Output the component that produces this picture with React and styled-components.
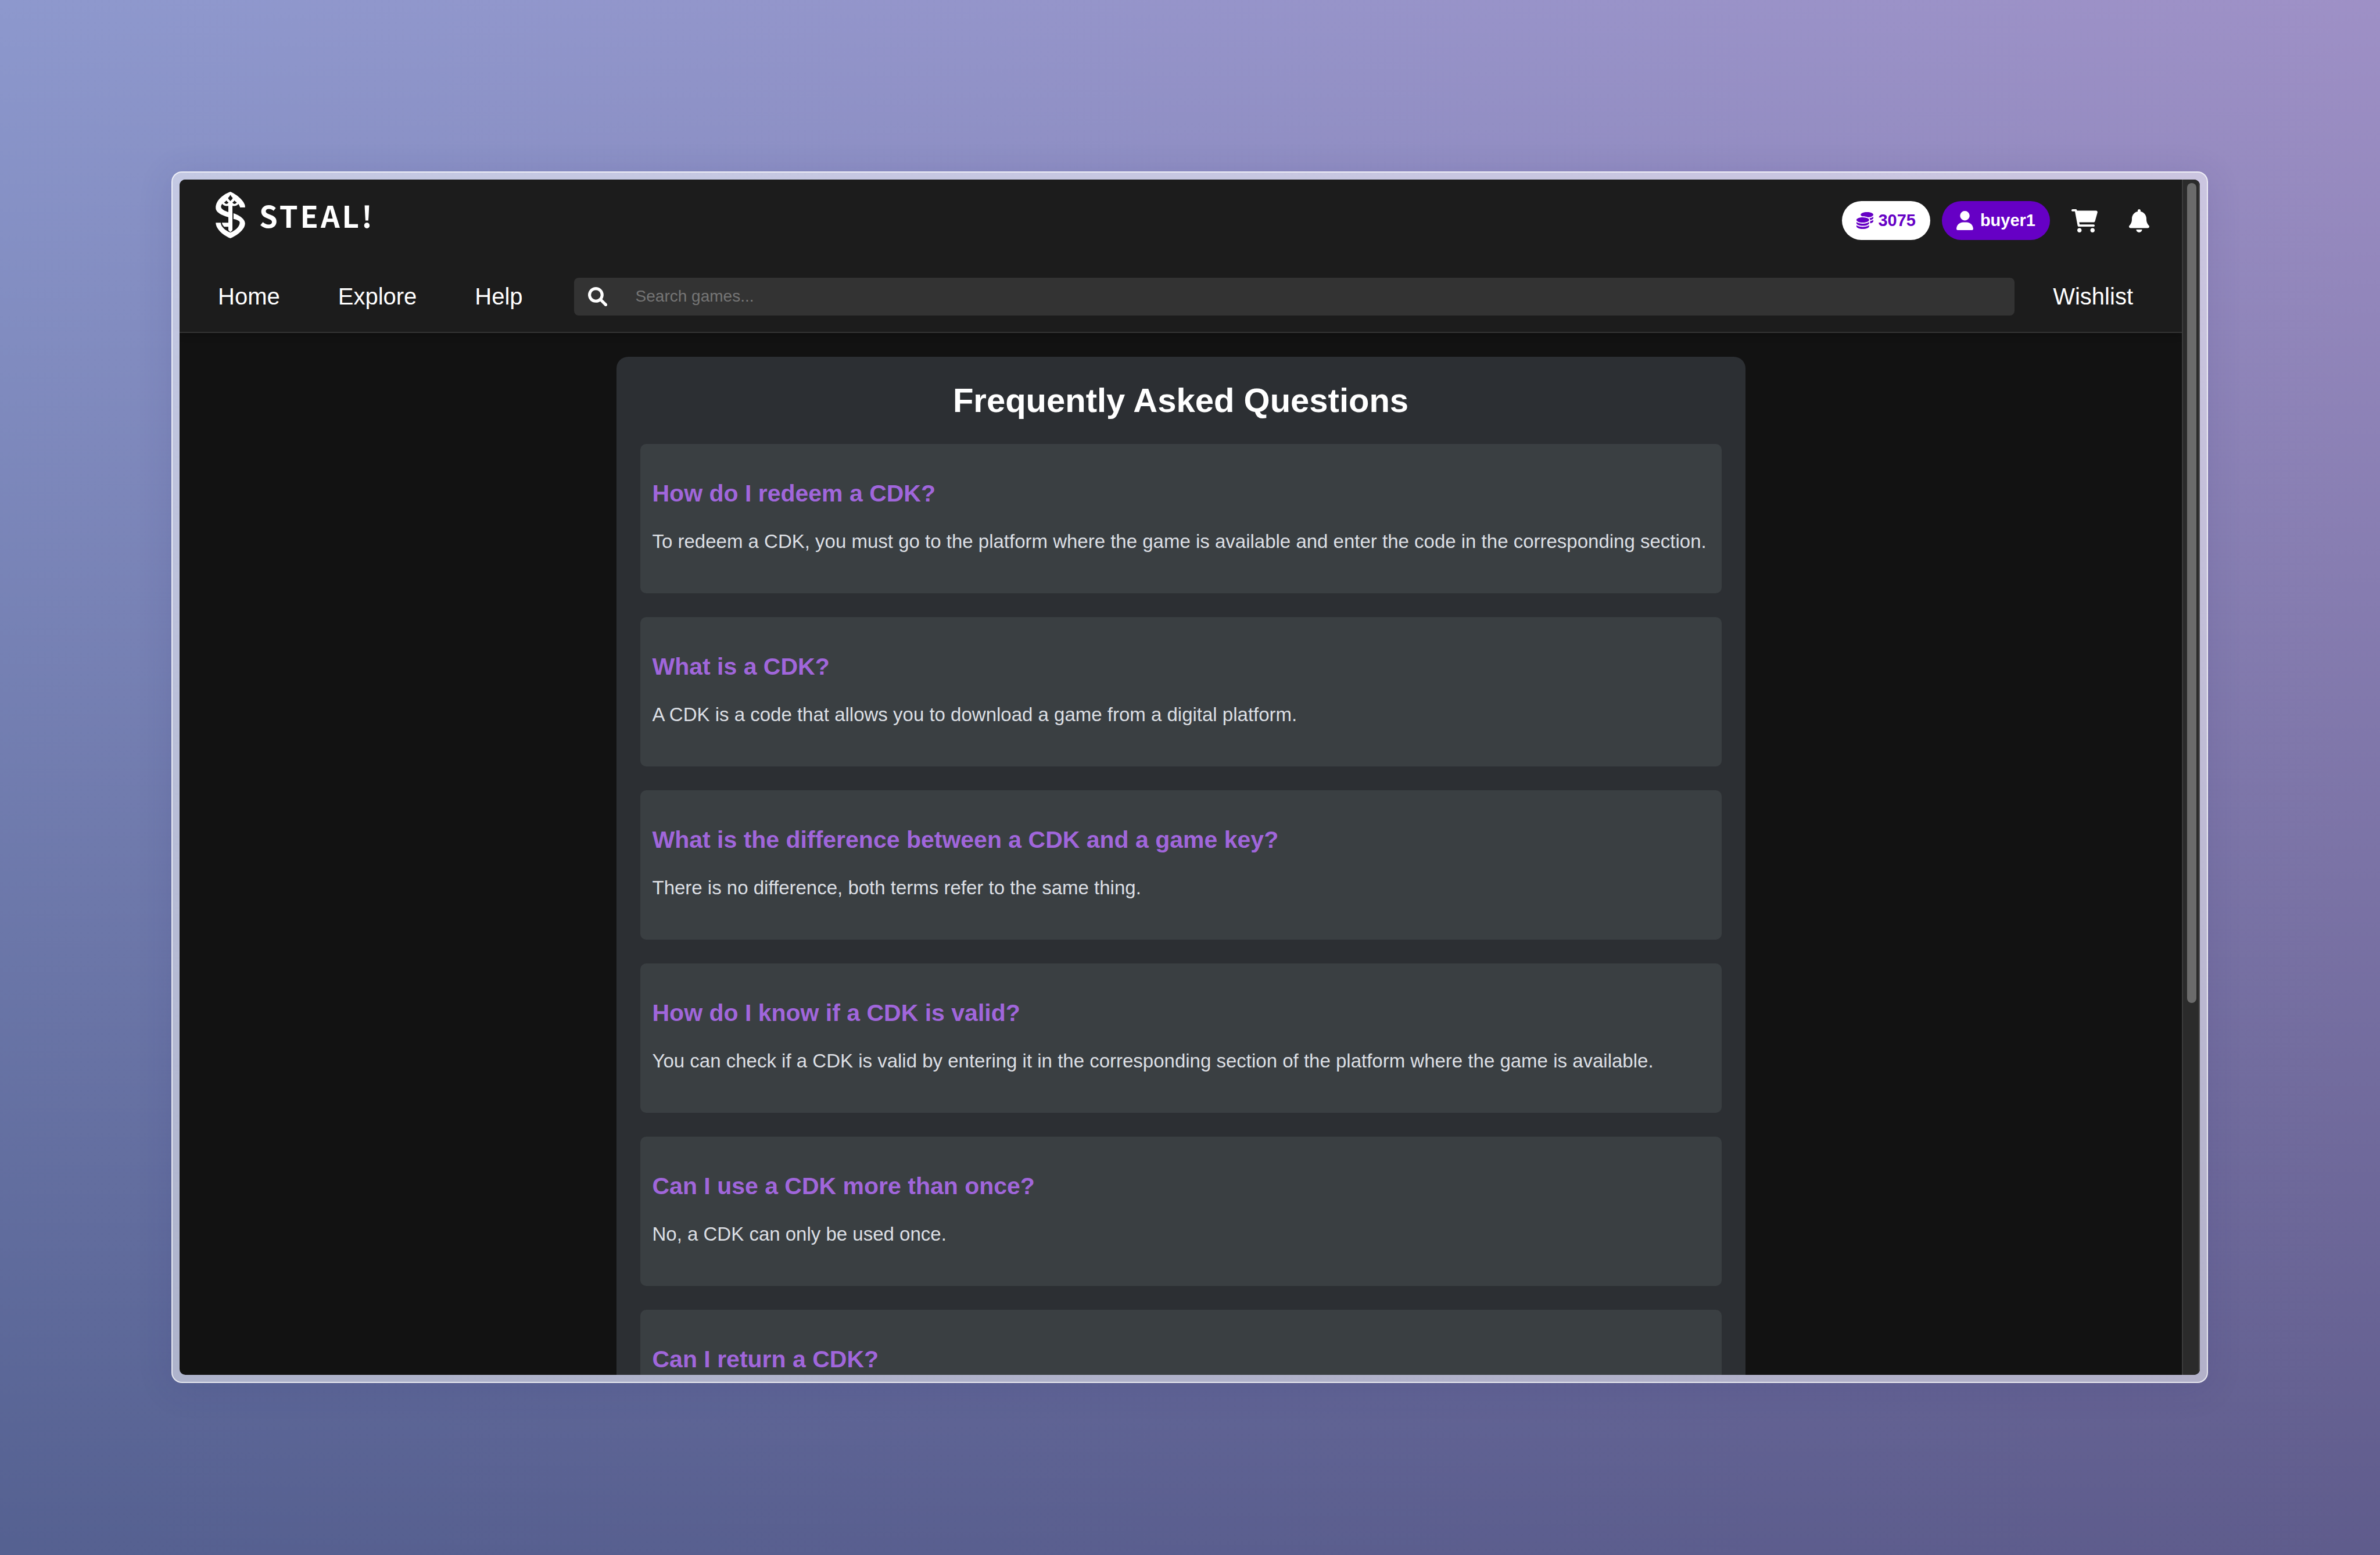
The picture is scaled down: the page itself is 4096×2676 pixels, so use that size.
import React from "react";
import styled, { createGlobalStyle } from "styled-components";
import { FaBell, FaCoins, FaUser } from "react-icons/fa6";

const GlobalStyle = createGlobalStyle`
  *, *::before, *::after { box-sizing: border-box; }
  body {
    margin: 0;
    font-family: "Liberation Sans", Arial, Helvetica, sans-serif;
    color: #fff;
  }
  h1, h2, p { margin: 0; }
  button, input { font: inherit; }
`;

const Backdrop = styled.div`
  display: flex;
  height: 100vh;
  padding: 295px 296px 296px 295px;
  background-image: linear-gradient(to bottom, #fff, #99a2b4),
    linear-gradient(to right, #8d98cd, #9e90c6);
  background-blend-mode: multiply;
`;

const Frame = styled.div`
  display: flex;
  flex: 1;
  min-width: 0;
  padding: 12px;
  border: 2px solid rgba(255, 255, 255, 0.7);
  border-radius: 18px;
  background: rgba(255, 255, 255, 0.5);
  box-shadow: 0 8px 60px rgba(40, 40, 110, 0.14);
`;

const Screen = styled.div`
  display: flex;
  flex: 1;
  min-width: 0;
  overflow: hidden;
  border-radius: 10px;
  background: #121212;
`;

const Page = styled.div`
  display: flex;
  flex: 1;
  flex-direction: column;
  min-width: 0;
  overflow: hidden;
`;

const Header = styled.header`
  display: flex;
  flex: none;
  flex-direction: column;
  gap: 65px;
  padding: 21px 0 28px;
  border-bottom: 2px solid #333;
  background: #1c1c1c;
  box-shadow: 0 4px 12px rgba(0, 0, 0, 0.2);
`;

const TopRow = styled.div`
  display: flex;
  align-items: flex-start;
  justify-content: space-between;
  padding: 0 56px 0 62px;
`;

const Brand = styled.a`
  display: flex;
  align-items: center;
  gap: 24px;
  color: #fff;
  text-decoration: none;
`;

const BrandMark = styled.svg`
  width: 51px;
  height: 80px;
  fill: currentColor;
`;

const BrandName = styled.span`
  font-family: "Noto Sans CJK JP", "Noto Sans", sans-serif;
  font-size: 51px;
  font-weight: 700;
  line-height: 80px;
  letter-spacing: 4px;
`;

const Actions = styled.div`
  display: flex;
  align-items: center;
  gap: 20px;
  padding-top: 16px;
`;

const Pill = styled.button`
  display: flex;
  align-items: center;
  gap: ${(p) => (p.$accent ? 12 : 8)}px;
  height: 67px;
  padding: 0 25px;
  border: 0;
  border-radius: 34px;
  background: ${(p) => (p.$accent ? "#6600c5" : "#fff")};
  color: ${(p) => (p.$accent ? "#fff" : "#6600c5")};
  font-size: 29px;
  font-weight: 700;
  line-height: 33px;
  cursor: pointer;

  svg {
    width: 29px;
    height: ${(p) => (p.$accent ? 33 : 29)}px;
  }
`;

const IconGroup = styled.div`
  display: flex;
  gap: 54px;
  padding-left: 17px;
`;

const IconButton = styled.button`
  display: flex;
  padding: 0;
  border: 0;
  background: none;
  color: #fff;
  cursor: pointer;

  svg {
    width: ${(p) => p.$width}px;
    height: 40px;
  }
`;

const NavRow = styled.div`
  display: flex;
  align-items: center;
  gap: 66px;
  padding: 0 84px 0 66px;
`;

const Nav = styled.nav`
  display: flex;
  gap: 100px;
  padding-right: 22px;
`;

const NavLink = styled.a`
  padding-bottom: 2px;
  color: #fff;
  font-size: 40px;
  line-height: 46px;
  text-decoration: none;
`;

const SearchBox = styled.form`
  display: flex;
  flex: 1;
  align-items: center;
  height: 65px;
  padding-left: 24px;
  border-radius: 8px;
  background: #333;
`;

const SearchLabel = styled.label`
  display: flex;
  padding-right: 49px;

  svg {
    width: 33px;
    height: 33px;
  }
`;

const SearchInput = styled.input`
  flex: 1;
  min-width: 0;
  height: 100%;
  padding: 0 0 2px;
  border: 0;
  outline: 0;
  background: none;
  color: #fff;
  font-size: 28px;

  &::placeholder {
    color: #757575;
    opacity: 1;
  }
`;

const Faq = styled.main`
  display: flex;
  flex: none;
  flex-direction: column;
  gap: 41px;
  width: 1943px;
  max-width: 100%;
  margin: 41px auto;
  padding: 41px;
  border-radius: 20px;
  background: #2c2f33;
`;

const Title = styled.h1`
  font-size: 58px;
  line-height: 68px;
  text-align: center;
`;

const Item = styled.section`
  min-height: 257px;
  padding: 61px 21px 70px;
  border-radius: 10px;
  background: #3a3f42;
`;

const Question = styled.h2`
  color: #a066db;
  font-size: 41px;
  line-height: 48px;
`;

const Answer = styled.p`
  margin-top: 40px;
  color: #dcdfe4;
  font-size: 33px;
  line-height: 38px;
`;

const ScrollTrack = styled.div`
  flex: none;
  width: 31px;
  padding: 6px 4px 6px 7px;
  border: solid;
  border-width: 0 2px;
  border-color: #3c3c3c #484848 #3c3c3c #3c3c3c;
  background: #2b2b2b;
`;

const ScrollThumb = styled.div`
  height: 69%;
  border-radius: 8px;
  background: #6b6b6b;
`;

const entries = [
  {
    question: "How do I redeem a CDK?",
    answer:
      "To redeem a CDK, you must go to the platform where the game is available and enter the code in the corresponding section.",
  },
  {
    question: "What is a CDK?",
    answer:
      "A CDK is a code that allows you to download a game from a digital platform.",
  },
  {
    question: "What is the difference between a CDK and a game key?",
    answer: "There is no difference, both terms refer to the same thing.",
  },
  {
    question: "How do I know if a CDK is valid?",
    answer:
      "You can check if a CDK is valid by entering it in the corresponding section of the platform where the game is available.",
  },
  {
    question: "Can I use a CDK more than once?",
    answer: "No, a CDK can only be used once.",
  },
  { question: "Can I return a CDK?" },
];

function Logo() {
  return (
    <BrandMark viewBox="332 180 190 298" aria-hidden="true">
      {/* upper hook with the three openings of the key's bow */}
      <path
        fillRule="evenodd"
        d="M427 180C462 194 512 232 521 269V281H489C487 272 484 265 478 258C472 268 456 274 440 270V425Q438 432 427 438Q416 432 414 425V343C384 334 333 316 333 283C333 232 388 193 427 180ZM375 257C370 263 367 270 367 276C367 292 392 304 414 310V270C398 274 381 268 375 257ZM427 200Q424 208 412 220Q415 230 427 240Q439 230 442 220Q430 208 427 200ZM402 236Q394 245 387 248Q392 257 402 258Q411 257 415 249Q408 246 402 236ZM453 236Q447 246 440 249Q444 257 453 258Q463 257 468 248Q460 245 453 236Z"
      />
      {/* lower hook */}
      <path d="M447 318C474 326 521 352 521 382C521 424 466 462 427 478C388 462 335 424 333 378H365C367 406 398 430 427 441C454 430 487 406 487 377C487 366 468 358 447 355Z" />
      {/* tooth of the key */}
      <path d="M372 378H416V404H387Q375 393 372 378Z" />
    </BrandMark>
  );
}

function CartIcon() {
  return (
    <svg viewBox="0 0 576 512" fill="currentColor" aria-hidden="true">
      <path d="M96 0C107.5 0 117.4 8.19 119.6 19.51L121.1 32H541.8C562.1 32 578.3 52.25 572.6 72.66L518.6 264.7C514.7 278.5 502.1 288 487.8 288H170.7L179.9 336H488C501.3 336 512 346.7 512 360C512 373.3 501.3 384 488 384H159.1C148.5 384 138.6 375.8 136.4 364.5L76.14 48H24C10.75 48 0 37.25 0 24C0 10.75 10.75 0 24 0H96ZM128 464C128 437.5 149.5 416 176 416C202.5 416 224 437.5 224 464C224 490.5 202.5 512 176 512C149.5 512 128 490.5 128 464ZM512 464C512 490.5 490.5 512 464 512C437.5 512 416 490.5 416 464C416 437.5 437.5 416 464 416C490.5 416 512 437.5 512 464Z" />
    </svg>
  );
}

function SearchIcon() {
  return (
    <svg viewBox="0 0 512 512" fill="none" stroke="#fff" aria-hidden="true">
      <circle cx="208" cy="208" r="168" strokeWidth="80" />
      <path d="M330 330L472 472" strokeWidth="80" strokeLinecap="round" />
    </svg>
  );
}

export default function App() {
  return (
    <>
      <GlobalStyle />
      <Backdrop>
        <Frame>
          <Screen>
            <Page>
              <Header>
                <TopRow>
                  <Brand href="#home">
                    <Logo />
                    <BrandName>STEAL!</BrandName>
                  </Brand>
                  <Actions>
                    <Pill type="button">
                      <FaCoins aria-hidden="true" />
                      3075
                    </Pill>
                    <Pill type="button" $accent>
                      <FaUser aria-hidden="true" />
                      buyer1
                    </Pill>
                    <IconGroup>
                      <IconButton type="button" aria-label="Cart" $width={45}>
                        <CartIcon />
                      </IconButton>
                      <IconButton
                        type="button"
                        aria-label="Notifications"
                        $width={35}
                      >
                        <FaBell />
                      </IconButton>
                    </IconGroup>
                  </Actions>
                </TopRow>
                <NavRow>
                  <Nav>
                    <NavLink href="#home">Home</NavLink>
                    <NavLink href="#explore">Explore</NavLink>
                    <NavLink href="#help">Help</NavLink>
                  </Nav>
                  <SearchBox role="search">
                    <SearchLabel htmlFor="search" aria-label="Search">
                      <SearchIcon />
                    </SearchLabel>
                    <SearchInput
                      id="search"
                      type="text"
                      placeholder="Search games..."
                    />
                  </SearchBox>
                  <NavLink href="#wishlist">Wishlist</NavLink>
                </NavRow>
              </Header>
              <Faq>
                <Title>Frequently Asked Questions</Title>
                {entries.map((entry) => (
                  <Item key={entry.question}>
                    <Question>{entry.question}</Question>
                    {entry.answer && <Answer>{entry.answer}</Answer>}
                  </Item>
                ))}
              </Faq>
            </Page>
            <ScrollTrack aria-hidden="true">
              <ScrollThumb />
            </ScrollTrack>
          </Screen>
        </Frame>
      </Backdrop>
    </>
  );
}
